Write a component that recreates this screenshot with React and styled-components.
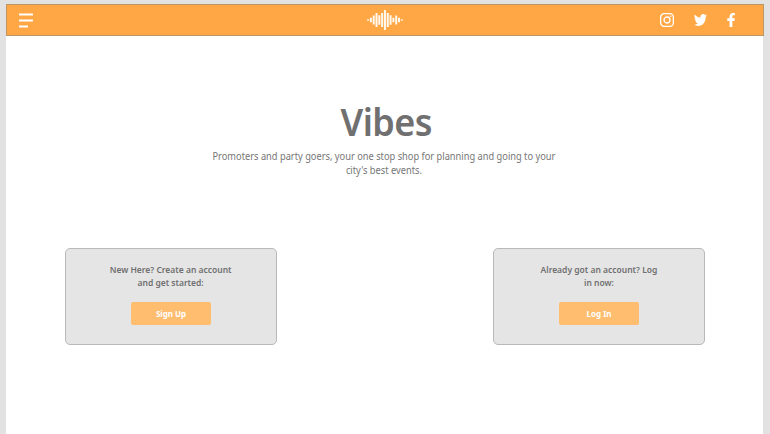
import React from 'react';
import styled, { createGlobalStyle } from 'styled-components';

const GlobalStyle = createGlobalStyle`
  * { box-sizing: border-box; }
  html, body { margin: 0; height: 100%; overflow: hidden; background: #e2e2e2; }
  body { font-family: "Noto Sans", "Open Sans", sans-serif; color: #707070; }
`;

const Page = styled.div`
  margin: 4px 0 0 6px;
  width: 757px;
  height: 430px;
  background: #fff;
`;

const Header = styled.header`
  display: grid;
  grid-template-columns: 1fr auto 1fr;
  align-items: center;
  width: 758px;
  height: 32px;
  padding: 0 12px;
  background: #ffa744;
  border: 1px solid #bd9665;
`;

const Icon = styled.svg`
  display: block;
  width: ${(p) => p.$w}px;
  height: ${(p) => p.$h}px;
`;

const MenuButton = styled.button`
  justify-self: start;
  padding: 0;
  border: 0;
  background: none;
`;

const Social = styled.nav`
  display: flex;
  align-items: center;
  justify-content: flex-end;
  gap: 20px;
  padding-right: 16px;
`;

const Hero = styled.section`
  display: flex;
  flex-direction: column;
  align-items: center;
  height: 212px;
  padding-top: 59px;
  text-align: center;
`;

const Title = styled.h1`
  margin: 0;
  font-size: 38px;
  line-height: 52px;
  font-weight: 580;
  letter-spacing: -0.6px;
  transform: translateX(2px) scaleX(0.947);
`;

const Tagline = styled.p`
  margin: 3px 0 0;
  font-size: 10px;
  line-height: 13.5px;
  color: #767676;
  transform: translateX(-1px) scaleX(0.927);
`;

const Line = styled.span`
  display: block;
  white-space: nowrap;
`;

const Cards = styled.section`
  display: flex;
  justify-content: space-between;
  padding: 0 58px 0 59px;
`;

const Card = styled.article`
  display: flex;
  flex-direction: column;
  align-items: center;
  width: 212px;
  height: 97px;
  padding-top: 14px;
  background: #e5e5e5;
  border: 1px solid #b9b9b9;
  border-radius: 5px;
`;

const Prompt = styled.p`
  margin: 0 0 13px;
  font-size: 9px;
  line-height: 13px;
  font-weight: 600;
  text-align: center;
  transform: scaleX(0.943);
`;

const Action = styled.button`
  width: 80px;
  height: 23px;
  padding: 0;
  border: 0;
  border-radius: 2px;
  background: #ffbd70;
  color: #fff;
  font: 700 8px/23px "Noto Sans", "Open Sans", sans-serif;
`;

const bars = [1.4, 4.5, 9, 14, 9.5, 14, 20, 14, 9.5, 4.5, 9, 4.5, 1.4];

function Wave() {
  return (
    <Icon $w={36} $h={20} viewBox="0 0 36 20" stroke="#fff8ef" strokeWidth="2" strokeLinecap="butt">
      {bars.map((h, i) => (
        <path key={i} d={`M${1.1 + i * 2.81} ${10 - h / 2}v${h}`} />
      ))}
    </Icon>
  );
}

function SignCard({ lines, action }) {
  return (
    <Card>
      <Prompt>{lines.map((l) => <Line key={l}>{l}</Line>)}</Prompt>
      <Action>{action}</Action>
    </Card>
  );
}

export default function App() {
  return (
    <>
      <GlobalStyle />
      <Page>
        <Header>
          <MenuButton aria-label="Menu">
            <Icon $w={14} $h={15} viewBox="0 0 14 15" fill="#fff">
              <path d="M0 .4h14v2H0zM0 6.4h14v2H0zM0 12.4h9v2H0z" />
            </Icon>
          </MenuButton>
          <Wave />
          <Social>
            <Icon $w={14} $h={14} viewBox="0 0 14 14" fill="none" stroke="#fff" strokeWidth="1.3">
              <rect x=".65" y=".65" width="12.7" height="12.7" rx="3.5" />
              <circle cx="7" cy="7" r="3" />
              <circle cx="10.7" cy="3.3" r=".8" fill="#fff" stroke="none" />
            </Icon>
            <Icon $w={13} $h={12} viewBox="0 2.2 24 19.6" preserveAspectRatio="none" fill="#fff">
              <path d="M23.95 4.57a10 10 0 0 1-2.82.77 4.96 4.96 0 0 0 2.16-2.72c-.95.55-2 .95-3.13 1.18a4.92 4.92 0 0 0-8.38 4.48C7.69 8.1 4.07 6.13 1.64 3.16a4.93 4.93 0 0 0 1.52 6.57 4.9 4.9 0 0 1-2.23-.61v.06a4.92 4.92 0 0 0 3.95 4.83 5 5 0 0 1-2.21.08 4.94 4.94 0 0 0 4.6 3.42A9.87 9.87 0 0 1 0 19.54a13.99 13.99 0 0 0 7.56 2.21c9.05 0 14-7.5 14-13.98 0-.21 0-.42-.02-.63a9.94 9.94 0 0 0 2.41-2.57z" />
            </Icon>
            <Icon $w={8} $h={14} viewBox="14 0 284 512" preserveAspectRatio="none" fill="#fff">
              <path d="M279 288l14-93h-89v-60c0-25 12-50 53-50h40V7s-37-7-72-7c-73 0-121 44-121 125v70H23v93h81v224h100V288z" />
            </Icon>
          </Social>
        </Header>
        <Hero>
          <Title>Vibes</Title>
          <Tagline>
            <Line>Promoters and party goers, your one stop shop for planning and going to your</Line>
            <Line>city's best events.</Line>
          </Tagline>
        </Hero>
        <Cards>
          <SignCard lines={['New Here? Create an account', 'and get started:']} action="Sign Up" />
          <SignCard lines={['Already got an account? Log', 'in now:']} action="Log In" />
        </Cards>
      </Page>
    </>
  );
}
